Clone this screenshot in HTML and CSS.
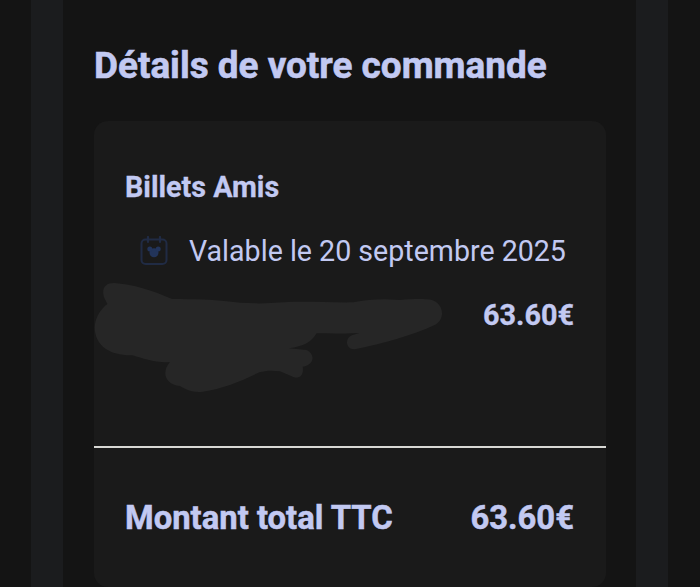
FILE: index.html
```
<!DOCTYPE html>
<html lang="fr">
<head>
    <meta charset="UTF-8">
    <meta name="viewport" content="width=device-width, initial-scale=1.0">
    <title>Détails de votre commande</title>
    <link rel="stylesheet" href="styles.css">
</head>
<body>
    <div class="wrapper">
        <main class="order">
            <h1 class="order-title">Détails de votre commande</h1>
            <section class="card">
                <div class="card-items">
                    <h2 class="ticket-name">Billets Amis</h2>
                    <div class="ticket-date">
                        <svg class="icon" width="28" height="30" viewBox="0 0 28 30" fill="none">
                            <rect x="1.5" y="3.5" width="25" height="24.5" rx="4" stroke="#202b44" stroke-width="2"/>
                            <path d="M8 1v5M20 1v5" stroke="#202b44" stroke-width="2.2" stroke-linecap="round"/>
                            <g fill="#22345a">
                                <circle cx="14" cy="16.8" r="4.5"/>
                                <circle cx="9.8" cy="13" r="2.5"/>
                                <circle cx="18.2" cy="13" r="2.5"/>
                            </g>
                        </svg>
                        <span class="date-text">Valable le 20 septembre 2025</span>
                    </div>
                    <div class="ticket-price">63.60€</div>
                    <svg class="scribble" width="380" height="130" viewBox="0 0 1140 390">
                        <path fill="#262626" d="M72 82C64 55 76 39 102 39C158 43 218 61 276 87C340 87 400 89 440 94C490 101 550 102 610 97C680 93 740 98 820 97C850 91 880 88 915 88L960 90C1000 86 1035 86 1056 90C1093 103 1096 148 1064 165C1000 195 910 220 824 238C798 240 792 205 816 196L838 189C790 192 750 188 710 190C692 218 672 229 626 235L680 240C706 252 704 284 668 290C672 312 662 326 642 322L600 304C575 301 555 302 538 307C480 334 430 356 368 365C340 368 318 360 300 348C254 344 244 305 270 276C230 280 190 266 158 256C95 258 45 232 44 172C46 140 62 118 82 102Z"/>
                    </svg>
                </div>
                <div class="card-total">
                    <span>Montant total TTC</span>
                    <span>63.60€</span>
                </div>
            </section>
        </main>
    </div>
</body>
</html>
```

FILE: styles.css
```
* {
    box-sizing: border-box;
}

body {
    margin: 0;
    height: 587px;
    overflow: hidden;
    background: #141414;
    color: #c2c9f2;
    font-family: Roboto, sans-serif;
}

.wrapper {
    width: 637px;
    height: 587px;
    margin-left: 31px;
    padding: 0 32px;
    background: #1b1c1e;
}

.order {
    height: 587px;
    padding: 44px 30px 0 31px;
    background: #141414;
}

.order-title {
    margin: 0 0 33px;
    font-size: 36.9px;
    font-weight: 700;
    line-height: 44px;
    white-space: nowrap;
    -webkit-text-stroke: 0.6px;
}

.card {
    width: 512px;
    height: 466px;
    border-radius: 14px;
    background: #1a1a1a;
}

.card-items {
    position: relative;
    height: 327px;
    padding: 34px 32px 0 31px;
    border-bottom: 2px solid #d8d8d4;
}

.ticket-name {
    margin: 0;
    font-size: 28.7px;
    font-weight: 700;
    line-height: 64px;
    -webkit-text-stroke: 0.3px;
}

.ticket-date {
    display: flex;
    align-items: center;
    height: 64px;
    padding-left: 15px;
    font-size: 28.6px;
    white-space: nowrap;
}

.icon {
    margin-right: 21px;
}

.ticket-price {
    font-size: 28.8px;
    font-weight: 700;
    line-height: 64px;
    text-align: right;
    -webkit-text-stroke: 0.3px;
}

/* masked part of the ticket line */
.scribble {
    position: absolute;
    left: -14px;
    top: 149px;
}

.card-total {
    display: flex;
    justify-content: space-between;
    padding: 0 32px 0 31px;
    font-size: 32.8px;
    font-weight: 700;
    line-height: 140px;
    -webkit-text-stroke: 0.5px;
}
```
